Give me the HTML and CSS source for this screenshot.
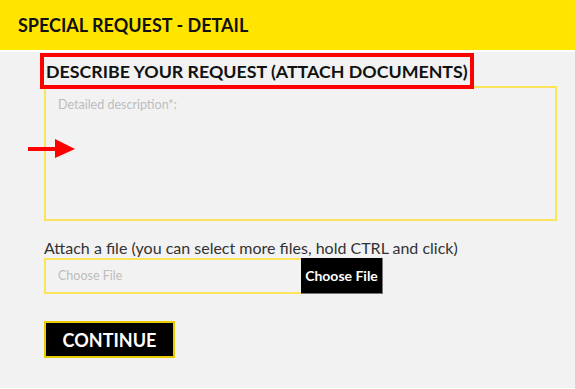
FILE: index.html
```html
<!DOCTYPE html>
<html lang="en">
<head>
  <meta charset="UTF-8" />
  <title>Special Request - Detail</title>
  <link rel="stylesheet" href="styles.css">
</head>
<body>

  <div class="page-head">
    <h1>SPECIAL REQUEST - DETAIL</h1>
  </div>

  <div class="section">
    <h2 class="marked">DESCRIBE YOUR REQUEST (ATTACH DOCUMENTS)</h2>
    <textarea class="desc" placeholder="Detailed description*:"></textarea>

    <!-- annotation arrow -->
    <svg class="arrow" width="48" height="20" viewBox="0 0 48 20">
      <rect x="0" y="8" width="28" height="4" fill="#ff0000"/>
      <polygon points="27,0 47,10 27,19" fill="#ff0000"/>
    </svg>

    <p class="label">Attach a file (you can select more files, hold CTRL and click)</p>
    <div class="file-row">
      <span class="file-name">Choose File</span>
      <label class="file-btn">Choose File<input type="file" multiple></label>
    </div>

    <button class="continue">CONTINUE</button>
  </div>

</body>
</html>
```

FILE: styles.css
```css
body {
  margin: 0;
  font-family: Lato, "Open Sans", sans-serif;
  background: #fff;
}
.page-head {
  background: #ffe500;
  height: 50px;
  padding-left: 18px;
  border-bottom: 2px solid #fff;
}
h1 {
  margin: 0;
  font-size: 18px;
  line-height: 50px;
  font-weight: 700;
  color: #111;
}
.section {
  position: relative;
  background: #f2f2f2;
  padding: 1px 18px 30px 44px;
}
.marked {
  position: relative;
  z-index: 1;
  display: inline-block;
  margin: 0 0 -3px -4px;
  padding: 0 2px;
  border: 4px solid #ff0000;
  font-size: 17.8px;
  line-height: 28px;
  font-weight: 700;
  color: #111;
}
.desc {
  display: block;
  box-sizing: border-box;
  width: 100%;
  height: 135px;
  margin: 0;
  padding: 9px 12px;
  border: 2px solid #fbe45c;
  background: #f2f2f2;
  font-family: inherit;
  font-size: 12.5px;
  resize: none;
}
.desc::placeholder {
  color: #bdbdbd;
}
.arrow {
  position: absolute;
  left: 28px;
  top: 87px;
}
.label {
  margin: 18px 0 1px;
  font-size: 16px;
  line-height: 18px;
  color: #333;
}
.file-row {
  display: flex;
  height: 36px;
}
.file-name {
  box-sizing: border-box;
  width: 257px;
  padding-left: 12px;
  border: 2px solid #fbe45c;
  border-right: none;
  font-size: 12.5px;
  line-height: 32px;
  color: #bdbdbd;
}
.file-btn {
  box-sizing: border-box;
  width: 82px;
  background: #000;
  color: #fff;
  font-size: 14px;
  font-weight: 700;
  line-height: 35px;
  text-align: center;
  border-right: 1px solid #777;
  border-bottom: 1px solid #777;
}
.file-btn input {
  display: none;
}
.continue {
  display: block;
  margin-top: 27px;
  width: 131px;
  height: 37px;
  padding: 0;
  background: #000;
  color: #fff;
  border: 2px solid #e8cb00;
  font-family: inherit;
  font-size: 18px;
  font-weight: 700;
}
```
